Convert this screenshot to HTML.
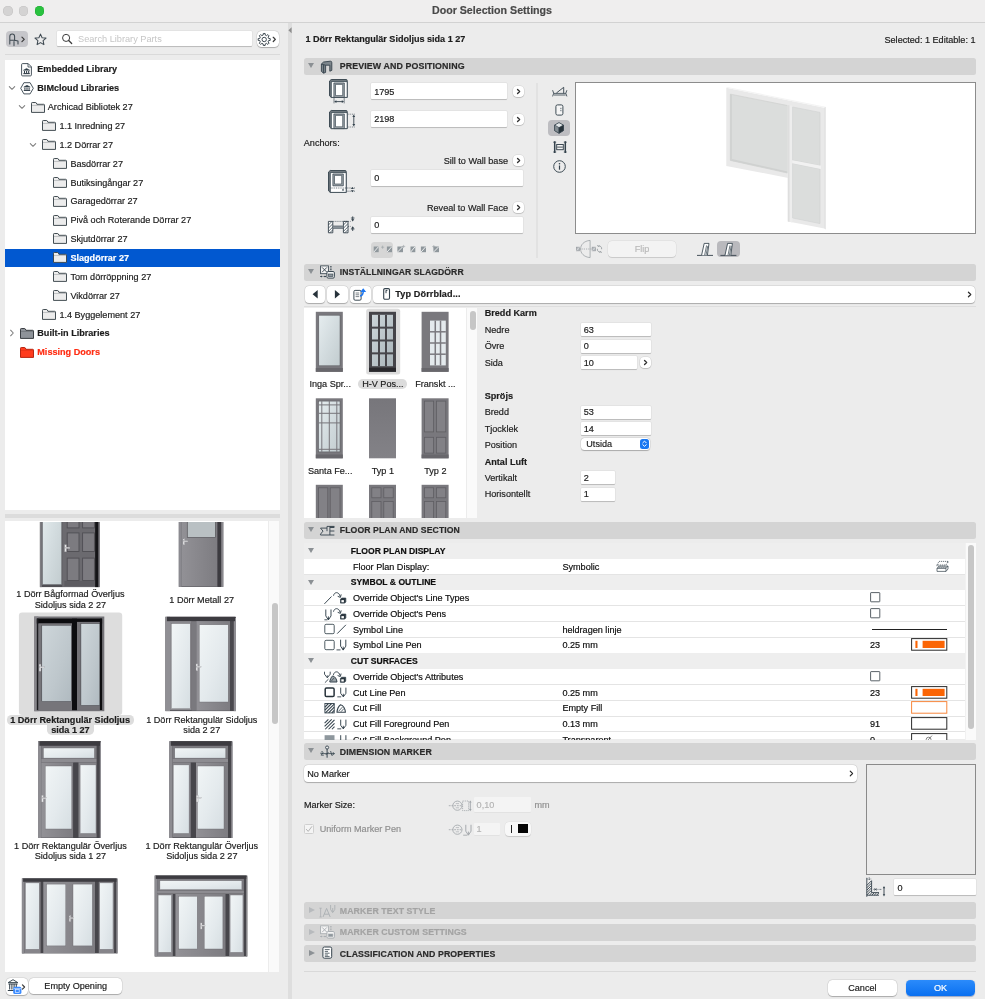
<!DOCTYPE html>
<html lang="sv"><head><meta charset="utf-8"><title>Door Selection Settings</title>
<style>
*{box-sizing:border-box;margin:0;padding:0}
html,body{width:985px;height:999px;overflow:hidden;background:#ececec}
body{font-family:"Liberation Sans",sans-serif;font-size:9.1px;color:#262626;position:relative;-webkit-font-smoothing:antialiased}
#w{position:absolute;left:0;top:0;width:985px;height:999px;will-change:transform;opacity:.999}
.a{position:absolute}
.t{position:absolute;white-space:nowrap;line-height:12px;height:12px;-webkit-text-stroke:.18px currentColor}
.b{font-weight:bold}
.fld{position:absolute;background:#fff;border-radius:.8px;box-shadow:0 0 0 .5px rgba(0,0,0,.06),0 .8px .9px rgba(0,0,0,.2);}
.btn{position:absolute;background:#fff;border-radius:4px;box-shadow:0 0 0 .5px rgba(0,0,0,.10),0 .7px 1px rgba(0,0,0,.25);}
.sec{position:absolute;left:303.8px;width:672.4px;height:17px;background:#d4d4d4;border-radius:2.5px}
.sec .t{font-weight:bold;left:36px;top:2.7px;font-size:8.75px;letter-spacing:.1px;color:#2a2a2a}
.tri{position:absolute;width:0;height:0;border-left:3.6px solid transparent;border-right:3.6px solid transparent;border-top:5.8px solid #8b9094}
.trir{position:absolute;width:0;height:0;border-top:3.5px solid transparent;border-bottom:3.5px solid transparent;border-left:6.2px solid #808080}
.rb{position:absolute;width:11px;height:11px;border-radius:3.8px;background:#fff;box-shadow:0 0 0 .5px rgba(0,0,0,.10),0 .6px 1px rgba(0,0,0,.28)}
svg{position:absolute;overflow:visible}
</style></head>
<body><div id="w">
<div class="a" style="left:0.0px;top:0.0px;width:985.0px;height:22.5px;background:#efeeee;border-bottom:1px solid #d2d2d2"></div>
<div class="a" style="left:3.2px;top:6.2px;width:9.6px;height:9.6px;border-radius:50%;background:#d4d3d3;box-shadow:inset 0 0 0 .5px #c3c2c2"></div>
<div class="a" style="left:18.8px;top:6.2px;width:9.6px;height:9.6px;border-radius:50%;background:#d4d3d3;box-shadow:inset 0 0 0 .5px #c3c2c2"></div>
<div class="a" style="left:34.6px;top:6.2px;width:9.6px;height:9.6px;border-radius:50%;background:#29c23f;box-shadow:inset 0 0 0 .5px #1fa833"></div>
<div class="t b" style="left:342.0px;width:300px;text-align:center;top:4.2px;font-size:10.65px;color:#484848;line-height:14px;height:14px;margin-top:-1px">Door Selection Settings</div>
<div class="a" style="left:5.6px;top:30.5px;width:22.2px;height:16.6px;background:#c6c6ca;border-radius:4px"></div>
<svg style="left:5.5px;top:30.6px;" width="22" height="16" viewBox="0 0 22 16"><g fill="none" stroke="#3f4a52" stroke-width="1.05" stroke-linecap="round" stroke-linejoin="round">
<path d="M3.8 13V5.6a2.4 2.6 0 0 1 4.8 0v3.6H3.8"/><path d="M8.6 9.2l3.4 .8v3M8 10.6v4"/></g><path d="M15.95 6.10 L18.25 8.40 L15.95 10.70" fill="none" stroke="#3a3a3a" stroke-width="1.2" stroke-linecap="round" stroke-linejoin="round"/></svg>
<svg style="left:33.5px;top:32.5px;" width="13" height="13" viewBox="0 0 13 13"><path d="M6.5 1.1 L8.1 4.7 L12 5.1 L9.1 7.7 L9.9 11.6 L6.5 9.6 L3.1 11.6 L3.9 7.7 L1 5.1 L4.9 4.7 Z" fill="none" stroke="#3f4a52" stroke-width="1.05" stroke-linejoin="round"/></svg>
<div class="fld" style="left:56.6px;top:31.0px;width:195.4px;height:15.0px;border-radius:.8px"></div>
<svg style="left:61.0px;top:33.0px;" width="12" height="12" viewBox="0 0 12 12"><circle cx="5.1" cy="4.9" r="3.55" fill="none" stroke="#3a3a3a" stroke-width="1"/><path d="M7.7 7.5 L10.7 10.5" stroke="#3a3a3a" stroke-width="1.2" stroke-linecap="round"/></svg>
<div class="t " style="left:78.0px;top:32.8px;color:#c6c6c6;font-size:9.2px;-webkit-text-stroke:0">Search Library Parts</div>
<div class="btn" style="left:257.3px;top:30.8px;width:21.7px;height:15.8px;border-radius:4.5px"></div>
<svg style="left:257.3px;top:30.8px;" width="22" height="16" viewBox="0 0 22 16"><g transform="translate(7.2,8.5)"><path d="M-1.06 -4.42 L-0.90 -6.03 L0.90 -6.03 L1.06 -4.42 L2.38 -3.88 L3.63 -4.90 L4.90 -3.63 L3.88 -2.38 L4.42 -1.06 L6.03 -0.90 L6.03 0.90 L4.42 1.06 L3.88 2.38 L4.90 3.63 L3.63 4.90 L2.38 3.88 L1.06 4.42 L0.90 6.03 L-0.90 6.03 L-1.06 4.42 L-2.38 3.88 L-3.63 4.90 L-4.90 3.63 L-3.88 2.38 L-4.42 1.06 L-6.03 0.90 L-6.03 -0.90 L-4.42 -1.06 L-3.88 -2.38 L-4.90 -3.63 L-3.63 -4.90 L-2.38 -3.88 Z" fill="none" stroke="#3f4a52" stroke-width="1" stroke-linejoin="round"/><circle r="2.2" fill="none" stroke="#3f4a52" stroke-width="1"/></g><path d="M16.27 6.33 L18.34 8.40 L16.27 10.47" fill="none" stroke="#3a3a3a" stroke-width="1.3" stroke-linecap="round" stroke-linejoin="round"/></svg>
<div class="a" style="left:5.0px;top:54.0px;width:275.0px;height:1.0px;background:#dadada"></div>
<div class="a" style="left:288.0px;top:22.5px;width:4.0px;height:976.5px;background:#dedede"></div>
<svg style="left:288.0px;top:27.0px;" width="4" height="7" viewBox="0 0 4 7"><path d="M3.6 0.3 L0.4 3.3 L3.6 6.3 Z" fill="#8d8d8d"/></svg>
<div class="a" style="left:5.0px;top:59.8px;width:275.0px;height:450.0px;background:#fff"></div>
<svg style="left:21.0px;top:62.5px;" width="11" height="13.5" viewBox="0 0 11 13.5"><path d="M.6 1.6 a1 1 0 0 1 1 -1 H7.2 L10.4 3.8 V11.9 a1 1 0 0 1 -1 1 H1.6 a1 1 0 0 1 -1 -1 Z" fill="#fff" stroke="#34424c" stroke-width=".9" stroke-linejoin="round"/><path d="M7 .8 V4 H10.2" fill="none" stroke="#34424c" stroke-width=".8"/><g transform="translate(5.6,8.3)"><path d="M-3.2 -1 L0 -2.9 L3.2 -1 Z" fill="#2f3c46" stroke="#2f3c46" stroke-width=".5" stroke-linejoin="round"/><path d="M-2.1 -.4 V1.6 M0 -.4 V1.6 M2.1 -.4 V1.6" stroke="#2f3c46" stroke-width="1.05"/><path d="M-3.2 2.3 H3.2" stroke="#2f3c46" stroke-width="1.1"/></g></svg>
<div class="t b" style="left:37.3px;top:63.4px;color:#1c1c1c">Embedded Library</div>
<svg style="left:7.7px;top:85.2px;" width="8" height="6" viewBox="0 0 8 6"><path d="M1.3 1.6 L4 4.3 L6.7 1.6" fill="none" stroke="#7d7d7d" stroke-width="1.05" stroke-linecap="round" stroke-linejoin="round"/></svg>
<svg style="left:19.6px;top:81.9px;" width="14" height="12.6" viewBox="0 0 14 12.6"><path d="M.7 6.3 L3.9 .7 H10.1 L13.3 6.3 L10.1 11.9 H3.9 Z" fill="#fff" stroke="#34424c" stroke-width=".9" stroke-linejoin="round"/><g transform="translate(7,6.1)"><path d="M-3.2 -1 L0 -2.9 L3.2 -1 Z" fill="#2f3c46" stroke="#2f3c46" stroke-width=".5" stroke-linejoin="round"/><path d="M-2.1 -.4 V1.6 M0 -.4 V1.6 M2.1 -.4 V1.6" stroke="#2f3c46" stroke-width="1.05"/><path d="M-3.2 2.3 H3.2" stroke="#2f3c46" stroke-width="1.1"/></g></svg>
<div class="t b" style="left:37.3px;top:82.3px;color:#1c1c1c">BIMcloud Libraries</div>
<svg style="left:18.4px;top:104.0px;" width="8" height="6" viewBox="0 0 8 6"><path d="M1.3 1.6 L4 4.3 L6.7 1.6" fill="none" stroke="#7d7d7d" stroke-width="1.05" stroke-linecap="round" stroke-linejoin="round"/></svg>
<svg style="left:30.5px;top:101.5px;" width="14" height="11" viewBox="0 0 14 11"><path d="M.5 10.4 V1.3 a.8 .8 0 0 1 .8 -.8 H4.6 a.8 .8 0 0 1 .7 .45 L5.9 2.3 H12.7 a.8 .8 0 0 1 .8 .8 V10.4 Z" fill="#ececec" stroke="#3a444b" stroke-width=".95" stroke-linejoin="round"/><path d="M.9 3.6 H13.1" stroke="#3a444b" stroke-width=".5" opacity=".55"/></svg>
<div class="t " style="left:47.8px;top:101.2px;color:#1c1c1c">Archicad Bibliotek 27</div>
<svg style="left:41.7px;top:120.3px;" width="14" height="11" viewBox="0 0 14 11"><path d="M.5 10.4 V1.3 a.8 .8 0 0 1 .8 -.8 H4.6 a.8 .8 0 0 1 .7 .45 L5.9 2.3 H12.7 a.8 .8 0 0 1 .8 .8 V10.4 Z" fill="#ececec" stroke="#3a444b" stroke-width=".95" stroke-linejoin="round"/><path d="M.9 3.6 H13.1" stroke="#3a444b" stroke-width=".5" opacity=".55"/></svg>
<div class="t " style="left:59.4px;top:120.0px;color:#1c1c1c">1.1 Inredning 27</div>
<svg style="left:29.4px;top:141.7px;" width="8" height="6" viewBox="0 0 8 6"><path d="M1.3 1.6 L4 4.3 L6.7 1.6" fill="none" stroke="#7d7d7d" stroke-width="1.05" stroke-linecap="round" stroke-linejoin="round"/></svg>
<svg style="left:41.7px;top:139.2px;" width="14" height="11" viewBox="0 0 14 11"><path d="M.5 10.4 V1.3 a.8 .8 0 0 1 .8 -.8 H4.6 a.8 .8 0 0 1 .7 .45 L5.9 2.3 H12.7 a.8 .8 0 0 1 .8 .8 V10.4 Z" fill="#ececec" stroke="#3a444b" stroke-width=".95" stroke-linejoin="round"/><path d="M.9 3.6 H13.1" stroke="#3a444b" stroke-width=".5" opacity=".55"/></svg>
<div class="t " style="left:59.4px;top:138.8px;color:#1c1c1c">1.2 Dörrar 27</div>
<svg style="left:52.5px;top:158.1px;" width="14" height="11" viewBox="0 0 14 11"><path d="M.5 10.4 V1.3 a.8 .8 0 0 1 .8 -.8 H4.6 a.8 .8 0 0 1 .7 .45 L5.9 2.3 H12.7 a.8 .8 0 0 1 .8 .8 V10.4 Z" fill="#ececec" stroke="#3a444b" stroke-width=".95" stroke-linejoin="round"/><path d="M.9 3.6 H13.1" stroke="#3a444b" stroke-width=".5" opacity=".55"/></svg>
<div class="t " style="left:70.4px;top:157.7px;color:#1c1c1c">Basdörrar 27</div>
<svg style="left:52.5px;top:176.9px;" width="14" height="11" viewBox="0 0 14 11"><path d="M.5 10.4 V1.3 a.8 .8 0 0 1 .8 -.8 H4.6 a.8 .8 0 0 1 .7 .45 L5.9 2.3 H12.7 a.8 .8 0 0 1 .8 .8 V10.4 Z" fill="#ececec" stroke="#3a444b" stroke-width=".95" stroke-linejoin="round"/><path d="M.9 3.6 H13.1" stroke="#3a444b" stroke-width=".5" opacity=".55"/></svg>
<div class="t " style="left:70.4px;top:176.6px;color:#1c1c1c">Butiksingångar 27</div>
<svg style="left:52.5px;top:195.8px;" width="14" height="11" viewBox="0 0 14 11"><path d="M.5 10.4 V1.3 a.8 .8 0 0 1 .8 -.8 H4.6 a.8 .8 0 0 1 .7 .45 L5.9 2.3 H12.7 a.8 .8 0 0 1 .8 .8 V10.4 Z" fill="#ececec" stroke="#3a444b" stroke-width=".95" stroke-linejoin="round"/><path d="M.9 3.6 H13.1" stroke="#3a444b" stroke-width=".5" opacity=".55"/></svg>
<div class="t " style="left:70.4px;top:195.4px;color:#1c1c1c">Garagedörrar 27</div>
<svg style="left:52.5px;top:214.6px;" width="14" height="11" viewBox="0 0 14 11"><path d="M.5 10.4 V1.3 a.8 .8 0 0 1 .8 -.8 H4.6 a.8 .8 0 0 1 .7 .45 L5.9 2.3 H12.7 a.8 .8 0 0 1 .8 .8 V10.4 Z" fill="#ececec" stroke="#3a444b" stroke-width=".95" stroke-linejoin="round"/><path d="M.9 3.6 H13.1" stroke="#3a444b" stroke-width=".5" opacity=".55"/></svg>
<div class="t " style="left:70.4px;top:214.3px;color:#1c1c1c">Pivå och Roterande Dörrar 27</div>
<svg style="left:52.5px;top:233.4px;" width="14" height="11" viewBox="0 0 14 11"><path d="M.5 10.4 V1.3 a.8 .8 0 0 1 .8 -.8 H4.6 a.8 .8 0 0 1 .7 .45 L5.9 2.3 H12.7 a.8 .8 0 0 1 .8 .8 V10.4 Z" fill="#ececec" stroke="#3a444b" stroke-width=".95" stroke-linejoin="round"/><path d="M.9 3.6 H13.1" stroke="#3a444b" stroke-width=".5" opacity=".55"/></svg>
<div class="t " style="left:70.4px;top:233.1px;color:#1c1c1c">Skjutdörrar 27</div>
<div class="a" style="left:5.0px;top:248.7px;width:275.0px;height:18.3px;background:#0058d0"></div>
<svg style="left:52.5px;top:252.3px;" width="14" height="11" viewBox="0 0 14 11"><path d="M.5 10.4 V1.3 a.8 .8 0 0 1 .8 -.8 H4.6 a.8 .8 0 0 1 .7 .45 L5.9 2.3 H12.7 a.8 .8 0 0 1 .8 .8 V10.4 Z" fill="#ececec" stroke="#3a444b" stroke-width=".95" stroke-linejoin="round"/><path d="M.9 3.6 H13.1" stroke="#3a444b" stroke-width=".5" opacity=".55"/></svg>
<div class="t b" style="left:70.4px;top:252.0px;color:#fff">Slagdörrar 27</div>
<svg style="left:52.5px;top:271.2px;" width="14" height="11" viewBox="0 0 14 11"><path d="M.5 10.4 V1.3 a.8 .8 0 0 1 .8 -.8 H4.6 a.8 .8 0 0 1 .7 .45 L5.9 2.3 H12.7 a.8 .8 0 0 1 .8 .8 V10.4 Z" fill="#ececec" stroke="#3a444b" stroke-width=".95" stroke-linejoin="round"/><path d="M.9 3.6 H13.1" stroke="#3a444b" stroke-width=".5" opacity=".55"/></svg>
<div class="t " style="left:70.4px;top:270.8px;color:#1c1c1c">Tom dörröppning 27</div>
<svg style="left:52.5px;top:290.0px;" width="14" height="11" viewBox="0 0 14 11"><path d="M.5 10.4 V1.3 a.8 .8 0 0 1 .8 -.8 H4.6 a.8 .8 0 0 1 .7 .45 L5.9 2.3 H12.7 a.8 .8 0 0 1 .8 .8 V10.4 Z" fill="#ececec" stroke="#3a444b" stroke-width=".95" stroke-linejoin="round"/><path d="M.9 3.6 H13.1" stroke="#3a444b" stroke-width=".5" opacity=".55"/></svg>
<div class="t " style="left:70.4px;top:289.6px;color:#1c1c1c">Vikdörrar 27</div>
<svg style="left:41.7px;top:308.9px;" width="14" height="11" viewBox="0 0 14 11"><path d="M.5 10.4 V1.3 a.8 .8 0 0 1 .8 -.8 H4.6 a.8 .8 0 0 1 .7 .45 L5.9 2.3 H12.7 a.8 .8 0 0 1 .8 .8 V10.4 Z" fill="#ececec" stroke="#3a444b" stroke-width=".95" stroke-linejoin="round"/><path d="M.9 3.6 H13.1" stroke="#3a444b" stroke-width=".5" opacity=".55"/></svg>
<div class="t " style="left:59.4px;top:308.5px;color:#1c1c1c">1.4 Byggelement 27</div>
<svg style="left:9.0px;top:328.7px;" width="6" height="8" viewBox="0 0 6 8"><path d="M1.6 1.2 L4.3 4 L1.6 6.8" fill="none" stroke="#7d7d7d" stroke-width="1.05" stroke-linecap="round" stroke-linejoin="round"/></svg>
<svg style="left:20.0px;top:327.7px;" width="14" height="11" viewBox="0 0 14 11"><path d="M.5 10.4 V1.3 a.8 .8 0 0 1 .8 -.8 H4.6 a.8 .8 0 0 1 .7 .45 L5.9 2.3 H12.7 a.8 .8 0 0 1 .8 .8 V10.4 Z" fill="#8e9399" stroke="#33373b" stroke-width=".95" stroke-linejoin="round"/><path d="M.9 3.6 H13.1" stroke="#33373b" stroke-width=".5" opacity=".55"/></svg>
<div class="t b" style="left:37.3px;top:327.4px;color:#1c1c1c">Built-in Libraries</div>
<svg style="left:20.0px;top:346.6px;" width="14" height="11" viewBox="0 0 14 11"><path d="M.5 10.4 V1.3 a.8 .8 0 0 1 .8 -.8 H4.6 a.8 .8 0 0 1 .7 .45 L5.9 2.3 H12.7 a.8 .8 0 0 1 .8 .8 V10.4 Z" fill="#ff3b1d" stroke="#b3200c" stroke-width=".95" stroke-linejoin="round"/><path d="M.9 3.6 H13.1" stroke="#b3200c" stroke-width=".5" opacity=".55"/></svg>
<div class="t b" style="left:37.3px;top:346.2px;color:#ff2c12">Missing Doors</div>
<div class="a" style="left:5.0px;top:513.8px;width:275.0px;height:4.0px;background:#dcdcdc"></div>
<svg width="0" height="0" style="left:0;top:0"><defs><linearGradient id="gl" x1="0" y1="0" x2="1" y2="1"><stop offset="0" stop-color="#e6edef"/><stop offset=".5" stop-color="#d3dcdf"/><stop offset="1" stop-color="#c2cccf"/></linearGradient><linearGradient id="gl2" x1="0" y1="0" x2="1" y2="0"><stop offset="0" stop-color="#cfd8db"/><stop offset=".5" stop-color="#e4ebed"/><stop offset="1" stop-color="#ccd5d8"/></linearGradient><linearGradient id="gl3" x1="0" y1="0" x2="1" y2="1"><stop offset="0" stop-color="#cdd6da"/><stop offset="1" stop-color="#a9b4b9"/></linearGradient><linearGradient id="glw" x1="0" y1="0" x2="1" y2="1"><stop offset="0" stop-color="#f1f5f6"/><stop offset=".55" stop-color="#e4eaed"/><stop offset="1" stop-color="#d6dee2"/></linearGradient><linearGradient id="frl" x1="0" y1="0" x2="1" y2="0"><stop offset="0" stop-color="#929196"/><stop offset="1" stop-color="#7d7c81"/></linearGradient><linearGradient id="gls" x1="0" y1="0" x2="1" y2="1"><stop offset="0" stop-color="#ced6da"/><stop offset=".6" stop-color="#bec7cc"/><stop offset="1" stop-color="#b0bac0"/></linearGradient><linearGradient id="fr" x1="0" y1="0" x2="1" y2="0"><stop offset="0" stop-color="#77767c"/><stop offset="1" stop-color="#5d5c62"/></linearGradient><linearGradient id="pn" x1="0" y1="0" x2="0" y2="1"><stop offset="0" stop-color="#77767b"/><stop offset="1" stop-color="#838287"/></linearGradient></defs></svg>
<div class="a" style="left:5.0px;top:521.4px;width:274.4px;height:450.8px;background:#fff"></div>
<div class="a" style="left:5px;top:521.5px;width:263px;height:450px;overflow:hidden">
<svg style="left:0;top:0" width="263" height="450"><rect x="34.90" y="-21.50" width="59.60" height="86.60" fill="#504f54" /><rect x="34.90" y="-21.50" width="1.90" height="86.60" fill="#7e7d82" /><rect x="37.30" y="-21.50" width="19.50" height="84.20" fill="url(#gl)" stroke="#55545a" stroke-width=".5"/><rect x="57.20" y="-21.50" width="33.00" height="86.40" fill="#6b6a6f" /><rect x="59.40" y="58.90" width="30.80" height="5.20" fill="#5d5c61" /><rect x="90.20" y="-21.50" width="3.00" height="86.60" fill="#141417" /><rect x="93.20" y="-21.50" width="1.30" height="86.60" fill="#5a595e" /><rect x="62.20" y="-21.50" width="11.80" height="27.40" fill="#7c7b80" stroke="#4f4e53" stroke-width=".9"/><rect x="62.20" y="10.90" width="11.80" height="18.60" fill="#7c7b80" stroke="#4f4e53" stroke-width=".9"/><rect x="62.20" y="36.10" width="11.80" height="22.40" fill="#7c7b80" stroke="#4f4e53" stroke-width=".9"/><rect x="77.60" y="-21.50" width="11.80" height="27.40" fill="#7c7b80" stroke="#4f4e53" stroke-width=".9"/><rect x="77.60" y="10.90" width="11.80" height="18.60" fill="#7c7b80" stroke="#4f4e53" stroke-width=".9"/><rect x="77.60" y="36.10" width="11.80" height="22.40" fill="#7c7b80" stroke="#4f4e53" stroke-width=".9"/><rect x="59.60" y="22.70" width="1.84" height="7.13" fill="#e8e8ea" stroke="#8c8c90" stroke-width=".3"/><rect x="60.29" y="25.23" width="4.60" height="1.26" fill="#f2f2f4" stroke="#8c8c90" stroke-width=".3"/><rect x="173.80" y="-21.50" width="44.50" height="86.40" fill="#5b5a60" /><rect x="173.80" y="-21.50" width="2.60" height="86.40" fill="#8b8a90" /><rect x="176.40" y="-21.50" width="36.10" height="85.60" fill="url(#frl)" /><rect x="212.50" y="-21.50" width="3.80" height="86.40" fill="#3c3b40" /><rect x="216.30" y="-21.50" width="2.00" height="86.40" fill="#8a898e" /><rect x="182.30" y="-21.50" width="28.10" height="37.00" fill="#b9c0c3" stroke="#56555a" stroke-width=".7"/><rect x="178.00" y="16.50" width="1.60" height="6.20" fill="#e8e8ea" stroke="#8c8c90" stroke-width=".3"/><rect x="178.60" y="18.70" width="4.00" height="1.10" fill="#f2f2f4" stroke="#8c8c90" stroke-width=".3"/><rect x="13.899999999999999" y="90.39999999999998" width="103.3" height="102.6" rx="3.2" fill="#dddddd"/><rect x="29.20" y="94.50" width="70.10" height="94.70" fill="#737277" /><rect x="29.20" y="94.50" width="4.20" height="94.70" fill="#87868b" /><rect x="31.80" y="96.50" width="65.30" height="5.00" fill="#0c0c0f" /><rect x="31.80" y="96.50" width="1.80" height="91.70" fill="#1c1c20" /><rect x="33.40" y="101.50" width="33.80" height="86.70" fill="#76757a" /><rect x="36.80" y="103.20" width="29.60" height="76.50" fill="url(#gls)" stroke="#3a393e" stroke-width=".5"/><rect x="67.00" y="96.70" width="5.00" height="91.50" fill="#0c0c0f" /><rect x="72.00" y="99.90" width="22.90" height="87.90" fill="#727176" /><rect x="75.90" y="101.50" width="19.00" height="82.10" fill="url(#gls)" stroke="#3a393e" stroke-width=".5"/><rect x="94.90" y="96.70" width="2.20" height="91.30" fill="#0c0c0f" /><rect x="34.10" y="142.10" width="1.84" height="7.13" fill="#e8e8ea" stroke="#8c8c90" stroke-width=".3"/><rect x="34.79" y="144.63" width="4.60" height="1.26" fill="#f2f2f4" stroke="#8c8c90" stroke-width=".3"/><rect x="160.40" y="94.80" width="70.60" height="94.30" fill="#4a494e" /><rect x="160.40" y="94.80" width="4.60" height="94.30" fill="#908f94" /><rect x="228.80" y="95.80" width="2.20" height="93.30" fill="#8f8e93" /><rect x="161.90" y="94.80" width="68.10" height="4.40" fill="#3c3b40" /><rect x="191.20" y="99.10" width="33.80" height="89.60" fill="url(#frl)" /><rect x="194.20" y="102.80" width="29.00" height="77.20" fill="url(#glw)" stroke="#6b6a6f" stroke-width=".4"/><rect x="186.60" y="99.20" width="4.60" height="89.50" fill="#7a797e" /><rect x="165.00" y="99.10" width="21.60" height="89.20" fill="#8a898e" /><rect x="166.20" y="101.60" width="19.00" height="85.20" fill="url(#glw)" stroke="#6b6a6f" stroke-width=".4"/><rect x="191.00" y="141.80" width="1.76" height="6.82" fill="#e8e8ea" stroke="#8c8c90" stroke-width=".3"/><rect x="191.66" y="144.22" width="4.40" height="1.21" fill="#f2f2f4" stroke="#8c8c90" stroke-width=".3"/><rect x="33.00" y="219.20" width="63.00" height="96.80" fill="#47464b" /><rect x="33.00" y="219.20" width="3.20" height="96.80" fill="#8d8c91" /><rect x="94.80" y="220.20" width="1.20" height="95.80" fill="#8f8e93" /><rect x="34.40" y="219.20" width="60.60" height="4.60" fill="#3d3c41" /><rect x="36.20" y="223.80" width="55.40" height="13.00" fill="#7c7b80" /><rect x="38.40" y="226.00" width="51.00" height="10.10" fill="url(#glw)" stroke="#6b6a6f" stroke-width=".4"/><rect x="36.20" y="236.80" width="55.40" height="3.80" fill="#8d8c91" /><rect x="36.20" y="240.60" width="32.10" height="75.10" fill="url(#frl)" /><rect x="40.20" y="244.00" width="26.60" height="63.00" fill="url(#glw)" stroke="#6b6a6f" stroke-width=".4"/><rect x="68.30" y="240.60" width="5.20" height="75.10" fill="#47464b" /><rect x="73.50" y="240.60" width="18.10" height="74.80" fill="#86858a" /><rect x="75.10" y="242.90" width="15.90" height="68.60" fill="url(#glw)" stroke="#6b6a6f" stroke-width=".4"/><rect x="36.60" y="273.20" width="1.76" height="6.82" fill="#e8e8ea" stroke="#8c8c90" stroke-width=".3"/><rect x="37.26" y="275.62" width="4.40" height="1.21" fill="#f2f2f4" stroke="#8c8c90" stroke-width=".3"/><rect x="164.40" y="219.20" width="63.00" height="96.80" fill="#47464b" /><rect x="164.40" y="219.20" width="3.20" height="96.80" fill="#8d8c91" /><rect x="226.20" y="220.20" width="1.20" height="95.80" fill="#8f8e93" /><rect x="165.80" y="219.20" width="60.60" height="4.60" fill="#3d3c41" /><rect x="167.60" y="223.80" width="55.40" height="13.00" fill="#7c7b80" /><rect x="169.80" y="226.00" width="51.00" height="10.10" fill="url(#glw)" stroke="#6b6a6f" stroke-width=".4"/><rect x="167.60" y="236.80" width="55.40" height="3.80" fill="#8d8c91" /><rect x="190.90" y="240.60" width="32.10" height="75.10" fill="url(#frl)" /><rect x="192.40" y="244.00" width="26.60" height="63.00" fill="url(#glw)" stroke="#6b6a6f" stroke-width=".4"/><rect x="185.70" y="240.60" width="5.20" height="75.10" fill="#47464b" /><rect x="167.60" y="240.60" width="18.10" height="74.80" fill="#86858a" /><rect x="168.20" y="242.90" width="15.90" height="68.60" fill="url(#glw)" stroke="#6b6a6f" stroke-width=".4"/><rect x="191.30" y="273.20" width="1.76" height="6.82" fill="#e8e8ea" stroke="#8c8c90" stroke-width=".3"/><rect x="191.96" y="275.62" width="4.40" height="1.21" fill="#f2f2f4" stroke="#8c8c90" stroke-width=".3"/><rect x="16.90" y="356.40" width="95.60" height="75.00" fill="#47464b" /><rect x="16.90" y="356.40" width="2.40" height="75.00" fill="#8d8c91" /><rect x="111.30" y="357.40" width="1.20" height="74.00" fill="#8f8e93" /><rect x="18.10" y="356.40" width="93.40" height="3.40" fill="#3d3c41" /><rect x="19.30" y="359.80" width="16.30" height="71.20" fill="#86858a" /><rect x="20.40" y="360.90" width="13.80" height="66.40" fill="url(#glw)" stroke="#6b6a6f" stroke-width=".4"/><rect x="93.80" y="359.80" width="15.30" height="71.20" fill="#86858a" /><rect x="94.70" y="360.90" width="13.30" height="66.40" fill="url(#glw)" stroke="#6b6a6f" stroke-width=".4"/><rect x="38.30" y="359.80" width="51.70" height="71.30" fill="url(#frl)" /><rect x="41.60" y="362.10" width="19.20" height="61.80" fill="url(#glw)" stroke="#6b6a6f" stroke-width=".4"/><rect x="68.00" y="362.10" width="19.30" height="61.80" fill="url(#glw)" stroke="#6b6a6f" stroke-width=".4"/><rect x="64.10" y="393.30" width="1.60" height="6.20" fill="#e8e8ea" stroke="#8c8c90" stroke-width=".3"/><rect x="64.70" y="395.50" width="4.00" height="1.10" fill="#f2f2f4" stroke="#8c8c90" stroke-width=".3"/><rect x="149.70" y="353.50" width="92.60" height="81.00" fill="#47464b" /><rect x="149.70" y="353.50" width="2.40" height="81.00" fill="#8d8c91" /><rect x="241.10" y="354.50" width="1.20" height="80.00" fill="#8f8e93" /><rect x="150.90" y="353.50" width="90.40" height="3.40" fill="#3d3c41" /><rect x="152.10" y="356.90" width="86.80" height="11.60" fill="#7c7b80" /><rect x="154.90" y="358.70" width="82.00" height="9.00" fill="url(#glw)" stroke="#6b6a6f" stroke-width=".4"/><rect x="152.10" y="368.50" width="86.80" height="3.20" fill="#8d8c91" /><rect x="152.10" y="371.90" width="15.71" height="62.20" fill="#86858a" /><rect x="153.11" y="373.00" width="13.35" height="57.40" fill="url(#glw)" stroke="#6b6a6f" stroke-width=".4"/><rect x="224.19" y="371.90" width="14.71" height="62.20" fill="#86858a" /><rect x="225.08" y="373.00" width="12.86" height="57.40" fill="url(#glw)" stroke="#6b6a6f" stroke-width=".4"/><rect x="170.43" y="371.90" width="50.08" height="62.30" fill="url(#frl)" /><rect x="173.62" y="374.20" width="18.60" height="52.80" fill="url(#glw)" stroke="#6b6a6f" stroke-width=".4"/><rect x="199.20" y="374.20" width="18.69" height="52.80" fill="url(#glw)" stroke="#6b6a6f" stroke-width=".4"/><rect x="195.42" y="400.90" width="1.60" height="6.20" fill="#e8e8ea" stroke="#8c8c90" stroke-width=".3"/><rect x="196.02" y="403.10" width="4.00" height="1.10" fill="#f2f2f4" stroke="#8c8c90" stroke-width=".3"/></svg>
</div>
<div class="t " style="left:-79.6px;width:300px;text-align:center;top:588.4px;color:#1c1c1c">1 Dörr Bågformad Överljus</div>
<div class="t " style="left:-79.6px;width:300px;text-align:center;top:598.5px;color:#1c1c1c">Sidoljus sida 2 27</div>
<div class="t " style="left:51.7px;width:300px;text-align:center;top:593.8px;color:#1c1c1c">1 Dörr Metall 27</div>
<div class="a" style="left:6.8px;top:715.3px;width:126.8px;height:9.5px;background:#dddddd;border-radius:4.6px"></div>
<div class="a" style="left:46.9px;top:724.4px;width:47.6px;height:10.4px;background:#dddddd;border-radius:0 0 4.8px 4.8px"></div>
<div class="t b" style="left:-79.9px;width:300px;text-align:center;top:714.1px;color:#1c1c1c">1 Dörr Rektangulär Sidoljus</div>
<div class="t b" style="left:-79.6px;width:300px;text-align:center;top:724.4px;color:#1c1c1c">sida 1 27</div>
<div class="t " style="left:51.8px;width:300px;text-align:center;top:714.1px;color:#1c1c1c">1 Dörr Rektangulär Sidoljus</div>
<div class="t " style="left:51.8px;width:300px;text-align:center;top:724.4px;color:#1c1c1c">sida 2 27</div>
<div class="t " style="left:-79.6px;width:300px;text-align:center;top:839.9px;color:#1c1c1c">1 Dörr Rektangulär Överljus</div>
<div class="t " style="left:-79.6px;width:300px;text-align:center;top:849.8px;color:#1c1c1c">Sidoljus sida 1 27</div>
<div class="t " style="left:51.8px;width:300px;text-align:center;top:839.9px;color:#1c1c1c">1 Dörr Rektangulär Överljus</div>
<div class="t " style="left:51.8px;width:300px;text-align:center;top:849.8px;color:#1c1c1c">Sidoljus sida 2 27</div>
<div class="a" style="left:268.0px;top:521.4px;width:11.4px;height:450.8px;background:#fafafa;border-left:1px solid #ececec"></div>
<div class="a" style="left:271.6px;top:602.6px;width:6.0px;height:121.4px;background:#c6c6c6;border-radius:3px"></div>
<div class="btn" style="left:5.5px;top:977.6px;width:22.2px;height:17.2px;border-radius:4.5px"></div>
<svg style="left:5.5px;top:977.6px;" width="23" height="17" viewBox="0 0 23 17"><g fill="none" stroke="#34424c" stroke-width=".95" stroke-linejoin="round"><path d="M2.2 4.6 L7 1.7 L11.8 4.6 Z" fill="#fff"/><path d="M2.4 5.9 H11.6 M3.7 6.4 V11.6 M5.9 6.4 V11.6 M8.1 6.4 V11.6 M10.3 6.4 V11.6 M1.8 12.4 H8" stroke-width="1.05"/></g>
<rect x="7.2" y="8.8" width="8.2" height="7.2" rx="1.6" fill="#3a8bff"/><path d="M7.6 10.6 H15" stroke="#cfe2ff" stroke-width=".7"/><rect x="9.6" y="11.6" width="3.6" height="2.8" fill="none" stroke="#dbe9ff" stroke-width=".7"/><path d="M16.46 6.93 L18.54 9.00 L16.46 11.07" fill="none" stroke="#3a3a3a" stroke-width="1.25" stroke-linecap="round" stroke-linejoin="round"/></svg>
<div class="btn" style="left:29.3px;top:978.0px;width:92.5px;height:15.8px;border-radius:4.5px"></div>
<div class="t " style="left:-74.3px;width:300px;text-align:center;top:979.9px;color:#1c1c1c">Empty Opening</div>
<div class="t b" style="left:305.4px;top:33.1px;color:#1c1c1c;font-size:9.05px">1 Dörr Rektangulär Sidoljus sida 1 27</div>
<div class="t " style="right:9.5px;top:33.5px;color:#1c1c1c">Selected: 1 Editable: 1</div>
<div class="sec" style="top:58.0px"><div class="tri" style="left:4.6px;top:5.1px"></div><svg style="left:15px;top:1.5px" width="20" height="14"><g fill="none" stroke="#34424c" stroke-width=".9" stroke-linejoin="round"><path d="M2.4 11.4 V4 L4.6 2 L11.4 1.2 a1.4 1.4 0 0 1 1.4 1.4 V10.4 L10.8 11.2 V5.2 H6.6 V12.4 L4.6 13.2 Z" fill="#7d868c"/><path d="M2.4 4 L6.6 5.2 M4.6 13 V5"/></g></svg><div class="t" style="font-size:8.85px;top:1.7px">PREVIEW AND POSITIONING</div></div>
<div class="fld" style="left:370.8px;top:82.8px;width:136.4px;height:16.0px;"></div>
<div class="t " style="left:374.2px;top:85.9px;color:#1c1c1c">1795</div>
<div class="fld" style="left:370.8px;top:110.6px;width:136.4px;height:16.0px;"></div>
<div class="t " style="left:374.2px;top:113.2px;color:#1c1c1c">2198</div>
<div class="rb" style="left:512.5px;top:86.0px"><svg style="left:0;top:0" width="11" height="11"><path d="M4.56 3.43 L6.63 5.50 L4.56 7.57" fill="none" stroke="#333" stroke-width="1.35" stroke-linecap="round" stroke-linejoin="round"/></svg></div>
<div class="rb" style="left:512.5px;top:113.5px"><svg style="left:0;top:0" width="11" height="11"><path d="M4.56 3.43 L6.63 5.50 L4.56 7.57" fill="none" stroke="#333" stroke-width="1.35" stroke-linecap="round" stroke-linejoin="round"/></svg></div>
<svg style="left:329.0px;top:79.2px;" width="20" height="25" viewBox="0 0 20 25"><g fill="none" stroke="#34424c" stroke-linejoin="round"><path d="M.5 2 L2.2 .5 H17.2 a1 1 0 0 1 1 1 V18.4 H2.2 L.5 16.799999999999997 Z" fill="#6f787e" stroke-width=".9"/><rect x="2.3" y="2.6" width="15.9" height="15.799999999999999" fill="#fff" stroke-width=".8"/><rect x="4.9" y="4" width="10.4" height="14.4" fill="#a4abb0" stroke-width=".75"/><rect x="6.5" y="5.4" width="7.2" height="11.2" fill="#fff" stroke-width=".65"/></g><g stroke="#34424c" stroke-width=".9" fill="#34424c"><path d="M6.4 22.6 H13.8" /><path d="M5.2 22.6 L7.4 21.2 V24 Z M15 22.6 L12.8 21.2 V24 Z" stroke="none"/><path d="M5 19 V24.4 M15.2 19 V24.4" stroke-width=".6"/></g></svg>
<svg style="left:329.0px;top:110.2px;" width="28" height="20" viewBox="0 0 28 20"><g fill="none" stroke="#34424c" stroke-linejoin="round"><path d="M.5 2 L2.2 .5 H17.2 a1 1 0 0 1 1 1 V18.6 H2.2 L.5 17.0 Z" fill="#6f787e" stroke-width=".9"/><rect x="2.3" y="2.6" width="15.9" height="16.0" fill="#fff" stroke-width=".8"/><rect x="4.9" y="4" width="10.4" height="14.6" fill="#a4abb0" stroke-width=".75"/><rect x="6.5" y="5.4" width="7.2" height="11.399999999999999" fill="#fff" stroke-width=".65"/></g><g stroke="#34424c" stroke-width=".9" fill="#34424c"><path d="M24.8 6.4 V14.6"/><path d="M24.8 4.6 L23.4 7 H26.2 Z M24.8 16.4 L23.4 14 H26.2 Z" stroke="none"/><path d="M19.4 4.2 H26.4 M19.4 17 H26.4" stroke-width=".6" stroke-dasharray="1 .8"/></g></svg>
<div class="t " style="left:303.8px;top:136.8px;color:#1c1c1c">Anchors:</div>
<div class="t " style="right:477.0px;top:154.7px;color:#1c1c1c">Sill to Wall base</div>
<div class="rb" style="left:512.5px;top:155.0px"><svg style="left:0;top:0" width="11" height="11"><path d="M4.56 3.43 L6.63 5.50 L4.56 7.57" fill="none" stroke="#333" stroke-width="1.35" stroke-linecap="round" stroke-linejoin="round"/></svg></div>
<div class="fld" style="left:370.8px;top:169.8px;width:152.6px;height:15.8px;"></div>
<div class="t " style="left:374.2px;top:172.0px;color:#1c1c1c">0</div>
<div class="t " style="right:477.0px;top:201.8px;color:#1c1c1c">Reveal to Wall Face</div>
<div class="rb" style="left:512.5px;top:202.1px"><svg style="left:0;top:0" width="11" height="11"><path d="M4.56 3.43 L6.63 5.50 L4.56 7.57" fill="none" stroke="#333" stroke-width="1.35" stroke-linecap="round" stroke-linejoin="round"/></svg></div>
<div class="fld" style="left:370.8px;top:216.8px;width:152.6px;height:16.2px;"></div>
<div class="t " style="left:374.2px;top:219.2px;color:#1c1c1c">0</div>
<svg style="left:328.3px;top:169.6px;" width="28" height="24" viewBox="0 0 28 24"><g fill="none" stroke="#34424c" stroke-linejoin="round"><path d="M.5 2 L2.2 .5 H17.2 a1 1 0 0 1 1 1 V22.4 H2.2 L.5 20.799999999999997 Z" fill="#6f787e" stroke-width=".9"/><rect x="2.3" y="2.6" width="15.9" height="19.799999999999997" fill="#fff" stroke-width=".8"/><rect x="4.9" y="4" width="10.4" height="11.8" fill="#a4abb0" stroke-width=".75"/><rect x="6.5" y="5.4" width="7.2" height="8.600000000000001" fill="#fff" stroke-width=".65"/></g><g stroke="#34424c" stroke-width=".7" fill="#34424c"><path d="M2.6 18 H27" stroke-dasharray="1 .8"/><path d="M19.4 21.2 H27" stroke-dasharray="1.2 .9"/><path d="M24.4 17 L22.9 19 H25.9 Z M24.4 22.2 L22.9 20.2 H25.9 Z" stroke="none"/><path d="M15 18.6 L16.2 20.4 H13.8 Z" stroke="none"/></g></svg>
<svg style="left:328.0px;top:221.0px;" width="28" height="13" viewBox="0 0 28 13"><g stroke="#34424c" fill="none" stroke-width=".8"><path d="M.4 .4 H4.8 V11.8 H.4 Z M15.4 .4 H20 V11.8 H15.4 Z" fill="#fff" stroke-width=".9"/><path d="M0.4 4 l3.4 -3.4"/><path d="M0.4 7.2 l4.4 -4.4"/><path d="M0.4 10.4 l4.4 -4.4"/><path d="M1.8 11.8 l3 -3"/><path d="M15.4 4 l3.4 -3.4"/><path d="M15.4 7.2 l4.4 -4.4"/><path d="M15.4 10.4 l4.4 -4.4"/><path d="M16.8 11.8 l3 -3"/><path d="M5 6.2 H15.2" stroke-width="2.2" stroke="#8e979d"/><path d="M5 5 H15.2 M5 7.4 H15.2" stroke-width=".6"/><path d="M4.8 .4 H22.6 M20 5.4 H22.6" stroke-dasharray="1 .9" stroke-width=".7"/><path d="M24.7 -4.6 V-1 M24.7 6.4 V10" stroke-width=".9"/><path d="M22.9 -3 H26.5 M22.9 8 H26.5" stroke-width=".8"/><path d="M24.7 .4 L23.1 -1.8 H26.3 Z M24.7 5.2 L23.1 7.4 H26.3 Z" fill="#34424c" stroke="none"/></g></svg>
<div class="a" style="left:371.4px;top:241.5px;width:21.8px;height:16.1px;background:#d6d6d6;border-radius:3.5px"></div>
<svg style="left:372.0px;top:241.5px;" width="80" height="16" viewBox="0 0 80 16"><g transform="translate(1.7,0)"><rect x="0" y="4.5" width="5" height="5.7" fill="#8f979c"/><path d="M.2 10.0 L4.8 4.7" stroke="#eceeef" stroke-width="1"/><g fill="none" stroke="#9aa1a6" stroke-width=".6"><path d="M8.9 3.6 V6.8 M7.3 5.2 H10.5"/></g></g><g transform="translate(14.9,0)"><rect x="0" y="4.5" width="5.1" height="5.7" fill="#8f979c"/><path d="M.2 10.0 L4.8999999999999995 4.7" stroke="#eceeef" stroke-width="1"/><g fill="none" stroke="#9aa1a6" stroke-width=".6"></g></g><g transform="translate(25.4,0)"><rect x="0" y="4.5" width="5.6" height="5.7" fill="#8f979c"/><path d="M.2 10.0 L5.3999999999999995 4.7" stroke="#eceeef" stroke-width="1"/><g fill="none" stroke="#9aa1a6" stroke-width=".6"><path d="M6.199999999999999 2.9 V6 M4.6 4.4 H7.8"/></g></g><g transform="translate(38.5,0)"><rect x="0" y="4.5" width="4.8" height="5.7" fill="#8f979c"/><path d="M.2 10.0 L4.6 4.7" stroke="#eceeef" stroke-width="1"/><g fill="none" stroke="#9aa1a6" stroke-width=".6"></g></g><g transform="translate(48.9,0)"><rect x="0" y="4.5" width="5.1" height="5.7" fill="#8f979c"/><path d="M.2 10.0 L4.8999999999999995 4.7" stroke="#eceeef" stroke-width="1"/><g fill="none" stroke="#9aa1a6" stroke-width=".6"></g></g><g transform="translate(61.4,0)"><rect x="0" y="4.5" width="5.6" height="5.7" fill="#8f979c"/><path d="M.2 10.0 L5.3999999999999995 4.7" stroke="#eceeef" stroke-width="1"/><g fill="none" stroke="#9aa1a6" stroke-width=".6"><path d="M.4 3 V6.2 M-1.2 4.6 H2"/></g></g></svg>
<div class="a" style="left:536.0px;top:82.6px;width:2.0px;height:175.0px;background:#e2e2e2"></div>
<div class="a" style="left:548.2px;top:119.5px;width:21.7px;height:16.2px;background:#bdbdc1;border-radius:4px"></div>
<svg style="left:551.5px;top:86.0px;" width="16" height="13" viewBox="0 0 16 13"><g fill="none" stroke="#34424c" stroke-width=".9" stroke-linejoin="round"><path d="M4.4 7 L11.7 1.3 V7.4" /><path d="M.6 4.2 q2.2 3.1 0 6.2 M14.9 4.2 q-2.2 3.1 0 6.2" stroke-width=".85"/><path d="M1.7 7.4 H13.8 M1.9 9 H13.6" stroke-width=".8"/></g></svg>
<svg style="left:555.0px;top:104.4px;" width="9" height="12" viewBox="0 0 9 12"><rect x=".9" y=".9" width="7" height="10.2" rx="1.6" fill="#f6f6f6" stroke="#34424c" stroke-width=".95"/><path d="M5.9 3.8 V7.4" stroke="#34424c" stroke-width=".8" stroke-dasharray="1.3 .8"/></svg>
<svg style="left:554.4px;top:122.2px;" width="10" height="12" viewBox="0 0 10 12"><path d="M5 .6 L9.4 3 V8.6 L5 11.2 L.6 8.6 V3 Z" fill="#e4e8ea" stroke="#34424c" stroke-width=".85" stroke-linejoin="round"/><path d="M.6 3 L5 5.6 V11.2 L.6 8.6 Z" fill="#858e94" stroke="#34424c" stroke-width=".6" stroke-linejoin="round"/><path d="M5 5.6 L9.4 3 V8.6 L5 11.2 Z" fill="#27323a" stroke="#34424c" stroke-width=".6" stroke-linejoin="round"/></svg>
<svg style="left:552.6px;top:140.6px;" width="14" height="13" viewBox="0 0 14 13"><g fill="none" stroke="#34424c"><path d="M1.7 .3 V11.9 M12.3 .3 V11.9" stroke-width="1.5"/><path d="M.2 1.2 H3.2 M.2 11 H3.2 M10.8 1.2 H13.8 M10.8 11 H13.8" stroke-width=".8"/><rect x="3.7" y="3.5" width="6.6" height="5.2" fill="#f4f4f4" stroke-width=".95"/><path d="M4.2 6.1 H9.8" stroke-width=".9"/></g></svg>
<svg style="left:552.9px;top:160.1px;" width="13" height="13" viewBox="0 0 13 13"><circle cx="6.5" cy="6.5" r="5.8" fill="none" stroke="#34424c" stroke-width=".95"/><path d="M6.5 5.5 V9.7" stroke="#34424c" stroke-width="1.2"/><circle cx="6.5" cy="3.7" r=".8" fill="#34424c"/></svg>
<div class="a" style="left:575.0px;top:82.3px;width:401.0px;height:151.8px;background:#fff;border:1.2px solid #8c8c8c"></div>
<svg style="left:575.0px;top:82.0px;" width="401" height="152" viewBox="0 0 401 152"><polygon points="151.3,5.8 249.4,25.7 249.4,146.5 213.3,139.4 213.3,95.9 151.3,84.0" fill="#e9e9e9"/><polygon points="151.3,5.8 152.5,4.9 250.6,24.8 249.4,25.7" fill="#f4f4f4"/><polygon points="249.4,25.7 250.6,24.8 250.6,147.4 249.4,146.5" fill="#d9d9d9"/><polygon points="155.4,12.2 212.6,23.6 212.6,91.0 155.4,78.4" fill="#dbdddc" stroke="#d0d2d1" stroke-width=".8"/><polygon points="155.4,12.2 156.8,12.8 156.8,77.4 155.4,78.4" fill="#cfd1d0"/><polygon points="155.4,78.4 156.8,77.0 212.6,89.4 212.6,91.0" fill="#cfd1d0"/><polygon points="212.6,22.8 217.4,23.8 217.4,140.4 212.6,139.4" fill="#ededed"/><polygon points="212.9,23.0 214.5,23.3 214.5,139.8 212.9,139.5" fill="#dedede"/><polygon points="217.6,25.0 245.0,30.4 245.0,83.6 217.6,78.2" fill="#dbdddc" stroke="#d0d2d1" stroke-width=".6"/><polygon points="217.6,81.4 245.0,87.0 245.0,141.6 217.6,136.0" fill="#dbdddc" stroke="#d0d2d1" stroke-width=".6"/><polygon points="217.4,78.2 246.0,83.8 246.0,86.9 217.4,81.3" fill="#f1f1f1"/></svg>
<svg style="left:576.0px;top:240.0px;" width="27" height="18" viewBox="0 0 27 18"><g fill="none" stroke="#9a9fa3" stroke-width=".75"><path d="M14.1 .4 V17.6 M14.1 .4 C7.6 1 4.6 5 4.6 9 C4.6 13 7.6 17 14.1 17.6"/><path d="M3.4 9 H16" stroke-dasharray="1.2 1"/><rect x=".4" y="7.2" width="3" height="3.6" fill="#b9bec2"/><path d="M.4 10.8 L3.4 7.2" stroke="#eee" stroke-width=".5"/><rect x="16.2" y="7.2" width="3.2" height="3.6" fill="#b9bec2"/><path d="M16.2 10.8 L19.4 7.2" stroke="#eee" stroke-width=".5"/><path d="M22 6.2 a2.6 2.6 0 0 1 3.6 3 M25 11.8 a2.6 2.6 0 0 1 -3.6 -3" stroke-width=".9"/><path d="M21.4 5 L22.2 6.6 L23.8 5.8 M25.6 13 L24.8 11.4 L23.2 12.2" stroke-width=".8"/></g></svg>
<div class="btn" style="left:607.8px;top:241.0px;width:68.6px;height:15.8px;background:#f3f3f3;border-radius:4px;box-shadow:0 0 0 .5px rgba(0,0,0,.07),0 .5px .8px rgba(0,0,0,.12)"></div>
<div class="t " style="left:492.0px;width:300px;text-align:center;top:243.2px;color:#b9b9b9">Flip</div>
<div class="a" style="left:717.2px;top:241.3px;width:22.8px;height:16.2px;background:#b9b9bd;border-radius:4px"></div>
<svg style="left:697.0px;top:241.0px;" width="44" height="16" viewBox="0 0 44 16"><g transform="translate(0,0)" fill="none" stroke="#34424c" stroke-width=".85" stroke-linejoin="round"><path d="M0 14.4 H16" stroke-width=".9"/><path d="M4.6 14.2 L7.2 2.4 H12 L10.4 14.2" fill="#fff"/><path d="M7.6 14.2 L9.6 4.4 M9 14.2 L10.8 5" stroke-width=".7"/></g><g transform="translate(23.4,0)" fill="none" stroke="#34424c" stroke-width=".85" stroke-linejoin="round"><path d="M0 14.4 H16" stroke-width=".9"/><path d="M4.6 14.2 L7.2 2.4 H12 L10.4 14.2" fill="#fff"/><path d="M7.6 14.2 L9.6 4.4 M9 14.2 L10.8 5" stroke-width=".7"/></g></svg>
<div class="sec" style="top:263.8px"><div class="tri" style="left:4.6px;top:5.1px"></div><svg style="left:15px;top:1.5px" width="20" height="14"><g fill="none" stroke="#34424c" stroke-width=".85"><rect x="1.6" y=".9" width="7.8" height="7.8" fill="#f4f4f4"/><path d="M3.1 2.4 L7.9 7.2 M7.9 2.4 L3.1 7.2" stroke-width=".9"/><path d="M11.9 1 V2.4 M11.9 3.6 V5.2" stroke-width="1.2"/><path d="M1.4 11.5 H3.4 M4.6 11.5 H6.8" stroke-width=".9"/><path d="M1.2 11.5 L2.6 10.5 V12.5 Z M7.2 11.5 L5.8 10.5 V12.5 Z" fill="#34424c" stroke="none"/><rect x="7.9" y="6.5" width="7.5" height="6.6" rx="1.3" fill="#f4f4f4" stroke-width=".95"/><rect x="9.4" y="9" width="4.5" height="2.6" fill="#8e979d" stroke-width=".6"/></g></svg><div class="t" style="font-size:8.6px;">INSTÄLLNINGAR SLAGDÖRR</div></div>
<div class="btn" style="left:304.6px;top:286.2px;width:20.8px;height:16.4px;"></div>
<div class="btn" style="left:327.4px;top:286.2px;width:20.8px;height:16.4px;"></div>
<div class="btn" style="left:350.4px;top:286.2px;width:20.8px;height:16.4px;"></div>
<div class="btn" style="left:373.2px;top:286.2px;width:602.2px;height:16.4px;"></div>
<svg style="left:304.6px;top:286.2px;" width="21" height="16" viewBox="0 0 21 16"><path d="M12.7 4 L7.6 8.3 L12.7 12.6 Z" fill="#27323a"/></svg>
<svg style="left:327.4px;top:286.2px;" width="21" height="16" viewBox="0 0 21 16"><path d="M7.9 4 L13 8.3 L7.9 12.6 Z" fill="#27323a"/></svg>
<svg style="left:350.4px;top:286.2px;" width="21" height="16" viewBox="0 0 21 16"><g fill="none" stroke="#34424c" stroke-width=".95"><rect x="3.9" y="4.4" width="7.2" height="9.8" rx="1.2" fill="#fff"/><path d="M5.6 7 H9.2 M5.6 8.8 H9.2 M5.6 10.6 H9.2" stroke-width=".9" stroke="#6f787e"/></g><path d="M10 9.9 C12.7 9.7 13.3 7.6 13.2 5" fill="none" stroke="#1c76f0" stroke-width="1.5"/><path d="M10.2 5.9 L13.2 2.2 L16.2 5.9 Z" fill="#1c76f0"/></svg>
<svg style="left:382.6px;top:288.2px;" width="8" height="13" viewBox="0 0 8 13"><rect x=".7" y=".6" width="5.8" height="10.6" rx="1.2" fill="#fff" stroke="#34424c" stroke-width="1.1"/><path d="M3 2.2 V5.2 M3 2.4 H4.4" stroke="#34424c" stroke-width="1"/></svg>
<div class="t b" style="left:395.3px;top:288.0px;color:#1c1c1c;letter-spacing:.12px">Typ Dörrblad...</div>
<svg style="left:964.0px;top:289.0px;" width="10" height="11" viewBox="0 0 10 11"><path d="M4.45 3.20 L6.75 5.50 L4.45 7.80" fill="none" stroke="#2a2a2a" stroke-width="1.25" stroke-linecap="round" stroke-linejoin="round"/></svg>
<div class="a" style="left:304.0px;top:306.0px;width:671.6px;height:1.0px;background:#dedede"></div>
<div class="a" style="left:303.8px;top:308.0px;width:162.0px;height:209.8px;background:#fff"></div>
<div class="a" style="left:465.8px;top:308.0px;width:11.2px;height:209.8px;background:#fafafa;border-left:1px solid #ececec"></div>
<div class="a" style="left:469.9px;top:311.0px;width:6.0px;height:19.4px;background:#c6c6c6;border-radius:3px"></div>
<div class="a" style="left:303.8px;top:307.2px;width:162px;height:210.6px;overflow:hidden">
<svg style="left:0;top:0" width="162" height="211"><rect x="11.80" y="4.80" width="27.00" height="60.00" fill="#79787d" /><rect x="11.80" y="61.00" width="27.00" height="3.80" fill="#68676c" /><rect x="14.80" y="8.20" width="21.20" height="50.60" fill="url(#gl)" stroke="#55545a" stroke-width=".5"/><rect x="62.19999999999999" y="1.8000000000000114" width="34" height="65.8" rx="2.5" fill="#dcdcdc"/><rect x="65.00" y="4.80" width="27.00" height="60.00" fill="#454449" /><rect x="65.00" y="61.00" width="27.00" height="3.80" fill="#68676c" /><rect x="65.00" y="60.80" width="27.00" height="4.00" fill="#29282c" /><rect x="68.00" y="7.80" width="21.00" height="51.40" fill="url(#gl3)" /><rect x="74.00" y="7.80" width="2.00" height="51.40" fill="#47464b" /><rect x="81.00" y="7.80" width="2.00" height="51.40" fill="#47464b" /><rect x="68.00" y="19.65" width="21.00" height="2.00" fill="#47464b" /><rect x="68.00" y="32.50" width="21.00" height="2.00" fill="#47464b" /><rect x="68.00" y="45.35" width="21.00" height="2.00" fill="#47464b" /><rect x="117.60" y="4.80" width="27.00" height="60.00" fill="#79787d" /><rect x="117.60" y="61.00" width="27.00" height="3.80" fill="#68676c" /><rect x="126.00" y="13.60" width="15.80" height="44.80" fill="#e4eaed" /><rect x="130.52" y="13.60" width="1.50" height="44.80" fill="#7b7a7f" /><rect x="135.78" y="13.60" width="1.50" height="44.80" fill="#7b7a7f" /><rect x="126.00" y="24.05" width="15.80" height="1.50" fill="#7b7a7f" /><rect x="126.00" y="35.25" width="15.80" height="1.50" fill="#7b7a7f" /><rect x="126.00" y="46.45" width="15.80" height="1.50" fill="#7b7a7f" /><rect x="11.80" y="91.30" width="27.00" height="60.00" fill="#79787d" /><rect x="11.80" y="147.50" width="27.00" height="3.80" fill="#68676c" /><rect x="14.60" y="94.10" width="21.40" height="50.80" fill="url(#gl)" stroke="#55545a" stroke-width=".5"/><rect x="17.30" y="94.10" width="1.00" height="50.80" fill="#77767b" /><rect x="24.80" y="94.10" width="1.00" height="50.80" fill="#77767b" /><rect x="32.30" y="94.10" width="1.00" height="50.80" fill="#77767b" /><rect x="14.60" y="97.40" width="21.40" height="1.00" fill="#77767b" /><rect x="14.60" y="105.80" width="21.40" height="1.00" fill="#77767b" /><rect x="14.60" y="115.40" width="21.40" height="1.00" fill="#77767b" /><rect x="14.60" y="141.80" width="21.40" height="1.00" fill="#77767b" /><rect x="65.00" y="91.30" width="27.00" height="60.00" fill="url(#pn)" /><rect x="117.60" y="91.30" width="27.00" height="60.00" fill="#79787d" /><rect x="117.60" y="147.50" width="27.00" height="3.80" fill="#68676c" /><rect x="120.40" y="94.10" width="9.20" height="30.80" fill="#828186" stroke="#5f5e63" stroke-width=".8"/><rect x="120.40" y="130.30" width="9.20" height="15.80" fill="#828186" stroke="#5f5e63" stroke-width=".8"/><rect x="132.40" y="94.10" width="9.40" height="30.80" fill="#828186" stroke="#5f5e63" stroke-width=".8"/><rect x="132.40" y="130.30" width="9.40" height="15.80" fill="#828186" stroke="#5f5e63" stroke-width=".8"/><rect x="11.80" y="177.80" width="27.00" height="60.00" fill="#79787d" /><rect x="11.80" y="234.00" width="27.00" height="3.80" fill="#68676c" /><rect x="14.40" y="180.80" width="9.40" height="51.00" fill="#828186" stroke="#5f5e63" stroke-width=".8"/><rect x="26.20" y="180.80" width="9.80" height="51.00" fill="#828186" stroke="#5f5e63" stroke-width=".8"/><rect x="65.00" y="177.80" width="27.00" height="60.00" fill="#79787d" /><rect x="65.00" y="234.00" width="27.00" height="3.80" fill="#68676c" /><rect x="67.80" y="180.80" width="9.20" height="10.00" fill="#828186" stroke="#5f5e63" stroke-width=".8"/><rect x="67.80" y="194.40" width="9.20" height="19.40" fill="#828186" stroke="#5f5e63" stroke-width=".8"/><rect x="79.80" y="180.80" width="9.40" height="10.00" fill="#828186" stroke="#5f5e63" stroke-width=".8"/><rect x="79.80" y="194.40" width="9.40" height="19.40" fill="#828186" stroke="#5f5e63" stroke-width=".8"/><rect x="117.60" y="177.80" width="27.00" height="60.00" fill="#79787d" /><rect x="117.60" y="234.00" width="27.00" height="3.80" fill="#68676c" /><rect x="120.40" y="180.80" width="9.20" height="10.00" fill="#828186" stroke="#5f5e63" stroke-width=".8"/><rect x="120.40" y="194.40" width="9.20" height="19.40" fill="#828186" stroke="#5f5e63" stroke-width=".8"/><rect x="132.40" y="180.80" width="9.40" height="10.00" fill="#828186" stroke="#5f5e63" stroke-width=".8"/><rect x="132.40" y="194.40" width="9.40" height="19.40" fill="#828186" stroke="#5f5e63" stroke-width=".8"/></svg>
</div>
<div class="a" style="left:358.3px;top:379.2px;width:49.2px;height:9.8px;background:#dcdcdc;border-radius:4.8px"></div>
<div class="t " style="left:180.2px;width:300px;text-align:center;top:378.1px;color:#1c1c1c">Inga Spr...</div>
<div class="t " style="left:232.9px;width:300px;text-align:center;top:378.1px;color:#1c1c1c">H-V Pos...</div>
<div class="t " style="left:285.4px;width:300px;text-align:center;top:378.1px;color:#1c1c1c">Franskt ...</div>
<div class="t " style="left:180.2px;width:300px;text-align:center;top:464.8px;color:#1c1c1c">Santa Fe...</div>
<div class="t " style="left:232.9px;width:300px;text-align:center;top:464.8px;color:#1c1c1c">Typ 1</div>
<div class="t " style="left:285.4px;width:300px;text-align:center;top:464.8px;color:#1c1c1c">Typ 2</div>
<div class="t b" style="left:484.7px;top:307.3px;color:#1c1c1c">Bredd Karm</div>
<div class="t " style="left:484.7px;top:323.8px;color:#1c1c1c">Nedre</div>
<div class="fld" style="left:580.8px;top:323.3px;width:70.0px;height:13.0px;"></div>
<div class="t " style="left:583.8px;top:323.6px;color:#1c1c1c">63</div>
<div class="t " style="left:484.7px;top:340.2px;color:#1c1c1c">Övre</div>
<div class="fld" style="left:580.8px;top:339.7px;width:70.0px;height:13.0px;"></div>
<div class="t " style="left:583.8px;top:340.1px;color:#1c1c1c">0</div>
<div class="t " style="left:484.7px;top:356.8px;color:#1c1c1c">Sida</div>
<div class="fld" style="left:580.8px;top:356.2px;width:56.0px;height:13.0px;"></div>
<div class="t " style="left:583.8px;top:356.6px;color:#1c1c1c">10</div>
<div class="rb" style="left:639.7px;top:357.3px"><svg style="left:0;top:0" width="11" height="11"><path d="M4.56 3.43 L6.63 5.50 L4.56 7.57" fill="none" stroke="#333" stroke-width="1.35" stroke-linecap="round" stroke-linejoin="round"/></svg></div>
<div class="t b" style="left:484.7px;top:390.0px;color:#1c1c1c">Spröjs</div>
<div class="t " style="left:484.7px;top:406.4px;color:#1c1c1c">Bredd</div>
<div class="fld" style="left:580.8px;top:405.9px;width:70.0px;height:13.0px;"></div>
<div class="t " style="left:583.8px;top:406.2px;color:#1c1c1c">53</div>
<div class="t " style="left:484.7px;top:422.9px;color:#1c1c1c">Tjocklek</div>
<div class="fld" style="left:580.8px;top:422.4px;width:70.0px;height:13.0px;"></div>
<div class="t " style="left:583.8px;top:422.8px;color:#1c1c1c">14</div>
<div class="t " style="left:484.7px;top:439.3px;color:#1c1c1c">Position</div>
<div class="btn" style="left:580.8px;top:437.8px;width:69.6px;height:12.6px;border-radius:3.5px"></div>
<div class="t " style="left:586.3px;top:438.1px;color:#1c1c1c">Utsida</div>
<div class="a" style="left:639.8px;top:439.3px;width:9.0px;height:9.5px;background:#1a78f2;border-radius:2.5px"></div>
<svg style="left:639.8px;top:439.3px;" width="9" height="9.5" viewBox="0 0 9 9.5"><path d="M2.8 3.8 L4.5 2.1 L6.2 3.8 M2.8 5.7 L4.5 7.4 L6.2 5.7" fill="none" stroke="#fff" stroke-width="1" stroke-linecap="round" stroke-linejoin="round"/></svg>
<div class="t b" style="left:484.7px;top:456.0px;color:#1c1c1c">Antal Luft</div>
<div class="t " style="left:484.7px;top:471.9px;color:#1c1c1c">Vertikalt</div>
<div class="fld" style="left:580.8px;top:471.4px;width:33.9px;height:13.0px;"></div>
<div class="t " style="left:583.8px;top:471.8px;color:#1c1c1c">2</div>
<div class="t " style="left:484.7px;top:488.3px;color:#1c1c1c">Horisontellt</div>
<div class="fld" style="left:580.8px;top:487.8px;width:33.9px;height:13.0px;"></div>
<div class="t " style="left:583.8px;top:488.1px;color:#1c1c1c">1</div>
<div class="sec" style="top:522.0px"><div class="tri" style="left:4.6px;top:5.1px"></div><svg style="left:15px;top:1.5px" width="20" height="14"><g fill="none" stroke="#34424c" stroke-width=".9" stroke-linejoin="round"><path d="M8 4.1 H1.5 L4 7.1 L1.5 10.2 V11 H15.4"/><path d="M8 7.2 V2.4 H15.4 M10.9 2.4 V11 M10.9 7 H15.4"/><path d="M11 3.2 H15.4" stroke-width="1.5"/></g></svg><div class="t" style="font-size:8.67px;top:1.8px">FLOOR PLAN AND SECTION</div></div>
<div class="a" style="left:304.0px;top:543.0px;width:671.6px;height:196.4px;background:#fff"></div>
<div class="a" style="left:304px;top:543px;width:671.6px;height:196.6px;overflow:hidden">
<div class="a" style="left:0;top:0.00px;width:661.0px;height:15.75px;background:#eeeeee"></div><div class="tri" style="left:3.6px;top:5.10px"></div><div class="t b" style="left:46.8px;top:1.75px;font-size:8.6px;color:#0e0e0e">FLOOR PLAN DISPLAY</div>
<div class="a" style="left:0;top:30.90px;width:661.0px;height:.9px;background:#e4e4e4"></div><div class="t" style="left:48.9px;top:17.50px;color:#0e0e0e">Floor Plan Display:</div><div class="t" style="left:258.4px;top:17.50px;color:#0e0e0e">Symbolic</div><svg style="left:631.6px;top:17.35px" width="13" height="13"><g fill="none" stroke="#34424c" stroke-width=".7"><path d="M1 5 L3 1.4 H12 L10 5 Z M1 5 V7 M12 1.4 V3" stroke-dasharray="1.2 .8"/><path d="M1 8.4 L3 6 H12 L10 8.4 Z M1 8.4 V11.4 H10 V8.4 M10 11.4 L12 9 V6" fill="#fff"/><path d="M2.6 8 L4.2 6.4 M4.6 8 L6.2 6.4 M6.6 8 L8.2 6.4 M8.6 8 L10.2 6.4" stroke-width=".9"/></g></svg>
<div class="a" style="left:0;top:31.50px;width:661.0px;height:15.75px;background:#eeeeee"></div><div class="tri" style="left:3.6px;top:36.60px"></div><div class="t b" style="left:46.8px;top:33.25px;font-size:8.6px;color:#0e0e0e">SYMBOL &amp; OUTLINE</div>
<div class="a" style="left:0;top:62.40px;width:661.0px;height:.9px;background:#e4e4e4"></div><svg style="left:19.6px;top:47.85px" width="24" height="14"><path d="M.4 12.9 L7.5 5.5" stroke="#34424c" stroke-width=".95"/><g transform="translate(9.5,1.1)"><path d="M0 3.6 C.8 -.4 5.4 -.8 6.7 4.4" fill="none" stroke="#34424c" stroke-width=".95"/><path d="M7.7 2.3 L6.9 5.3 L4.2 4.2" fill="none" stroke="#34424c" stroke-width=".95" stroke-linejoin="round"/><path d="M7 7.2 L8.2 6 H12.3 V9.8 L11.2 11 H7 Z" fill="#2a353d" stroke="#34424c" stroke-width=".8" stroke-linejoin="round"/><rect x="7.9" y="8" width="2.5" height="2.2" fill="#fff"/></g></svg><div class="t" style="left:48.9px;top:49.00px;color:#0e0e0e">Override Object's Line Types</div><svg style="left:565.6px;top:49.25px" width="11" height="11"><rect x=".6" y=".6" width="9.2" height="9.2" rx=".5" fill="#fff" stroke="#3c464d" stroke-width=".85"/></svg>
<div class="a" style="left:0;top:78.15px;width:661.0px;height:.9px;background:#e4e4e4"></div><svg style="left:19.6px;top:63.60px" width="24" height="14"><path d="M1.8 2.5 V8.95 L4.40 12.90 L7.00 8.95 V2.5" fill="none" stroke="#34424c" stroke-width=".95" stroke-linejoin="miter"/><path d="M4.40 9.36 V12.50" stroke="#34424c" stroke-width=".9"/><path d="M3.36 11.03 L4.40 12.90 L5.44 11.03 Z" fill="#34424c"/><path d="M0.4 12.8 H3.4" stroke="#34424c" stroke-width=".9"/><g transform="translate(9.5,1.1)"><path d="M0 3.6 C.8 -.4 5.4 -.8 6.7 4.4" fill="none" stroke="#34424c" stroke-width=".95"/><path d="M7.7 2.3 L6.9 5.3 L4.2 4.2" fill="none" stroke="#34424c" stroke-width=".95" stroke-linejoin="round"/><path d="M7 7.2 L8.2 6 H12.3 V9.8 L11.2 11 H7 Z" fill="#2a353d" stroke="#34424c" stroke-width=".8" stroke-linejoin="round"/><rect x="7.9" y="8" width="2.5" height="2.2" fill="#fff"/></g></svg><div class="t" style="left:48.9px;top:64.75px;color:#0e0e0e">Override Object's Pens</div><svg style="left:565.6px;top:65.00px" width="11" height="11"><rect x=".6" y=".6" width="9.2" height="9.2" rx=".5" fill="#fff" stroke="#3c464d" stroke-width=".85"/></svg>
<div class="a" style="left:0;top:93.90px;width:661.0px;height:.9px;background:#e4e4e4"></div><svg style="left:19.6px;top:79.35px" width="24" height="14"><rect x="0.8" y="2.3" width="9.4" height="9.4" rx="1.3" fill="#fff" stroke="#46535b" stroke-width="0.95"/><path d="M13.2 11.65 L21.9 2.85" stroke="#34424c" stroke-width=".95"/></svg><div class="t" style="left:48.9px;top:80.50px;color:#0e0e0e">Symbol Line</div><div class="t" style="left:258.4px;top:80.50px;color:#0e0e0e">heldragen linje</div><div class="a" style="left:567.8px;top:86.25px;width:75.6px;height:1px;background:#222"></div>
<div class="a" style="left:0;top:109.65px;width:661.0px;height:.9px;background:#e4e4e4"></div><svg style="left:19.6px;top:95.10px" width="24" height="14"><rect x="0.8" y="2.3" width="9.4" height="9.4" rx="1.3" fill="#fff" stroke="#46535b" stroke-width="0.95"/><path d="M12.5 11.9 H16.5" stroke="#34424c" stroke-width=".9"/><path d="M16.6 1.7 V8.15 L19.20 12.10 L21.80 8.15 V1.7" fill="none" stroke="#34424c" stroke-width=".95" stroke-linejoin="miter"/><path d="M19.20 8.56 V11.70" stroke="#34424c" stroke-width=".9"/><path d="M18.16 10.23 L19.20 12.10 L20.24 10.23 Z" fill="#34424c"/></svg><div class="t" style="left:48.9px;top:96.25px;color:#0e0e0e">Symbol Line Pen</div><div class="t" style="left:258.4px;top:96.25px;color:#0e0e0e">0.25 mm</div><div class="t" style="left:566px;top:96.25px;color:#0e0e0e">23</div><svg style="left:607px;top:95.40px" width="37" height="13"><rect x=".6" y=".6" width="35.2" height="11.6" fill="#fff" stroke="#2a2a2a" stroke-width="1"/><rect x="4.4" y="2.8" width="2.1" height="7.2" fill="#fb6505"/><rect x="11.6" y="2.8" width="22" height="7.2" fill="#fb6505"/></svg>
<div class="a" style="left:0;top:110.25px;width:661.0px;height:15.75px;background:#eeeeee"></div><div class="tri" style="left:3.6px;top:115.35px"></div><div class="t b" style="left:46.8px;top:112.00px;font-size:8.6px;color:#0e0e0e">CUT SURFACES</div>
<div class="a" style="left:0;top:141.15px;width:661.0px;height:.9px;background:#e4e4e4"></div><svg style="left:19.6px;top:126.60px" width="24" height="14"><path d="M.5 1.7 V4.2 L3.3 7.8 L6.2 4.2 V1.7 M3.3 5.4 V7.6" fill="none" stroke="#34424c" stroke-width=".9" stroke-linejoin="round"/><path d="M.9 12.7 L4.5 9.1" stroke="#34424c" stroke-width=".9"/><path d="M5.8 12 H13 C12.8 9.4 11 6.2 8.6 5.9 C7 7.4 6 9.6 5.8 12 Z" fill="#9aa2a7" stroke="#34424c" stroke-width="1" stroke-linejoin="round"/><path d="M7.4 11 L10 8" stroke="#34424c" stroke-width=".7"/><g transform="translate(9.4,1.3)"><path d="M0 3.6 C.8 -.4 5.4 -.8 6.7 4.4" fill="none" stroke="#34424c" stroke-width=".95"/><path d="M7.7 2.3 L6.9 5.3 L4.2 4.2" fill="none" stroke="#34424c" stroke-width=".95" stroke-linejoin="round"/><path d="M7 7.2 L8.2 6 H12.3 V9.8 L11.2 11 H7 Z" fill="#2a353d" stroke="#34424c" stroke-width=".8" stroke-linejoin="round"/><rect x="7.9" y="8" width="2.5" height="2.2" fill="#fff"/></g></svg><div class="t" style="left:48.9px;top:127.75px;color:#0e0e0e">Override Object's Attributes</div><svg style="left:565.6px;top:128.00px" width="11" height="11"><rect x=".6" y=".6" width="9.2" height="9.2" rx=".5" fill="#fff" stroke="#3c464d" stroke-width=".85"/></svg>
<div class="a" style="left:0;top:156.90px;width:661.0px;height:.9px;background:#e4e4e4"></div><svg style="left:19.6px;top:142.35px" width="24" height="14"><rect x="1.2" y="2.95" width="8.9" height="8.6" rx="1.3" fill="#fff" stroke="#27323a" stroke-width="1.5"/><path d="M13.3 11.85 H17.2" stroke="#34424c" stroke-width=".9"/><path d="M16.7 2.65 V8.35 L19.30 11.85 L21.90 8.35 V2.65" fill="none" stroke="#34424c" stroke-width=".95" stroke-linejoin="miter"/><path d="M19.30 8.72 V11.45" stroke="#34424c" stroke-width=".9"/><path d="M18.26 10.19 L19.30 11.85 L20.34 10.19 Z" fill="#34424c"/></svg><div class="t" style="left:48.9px;top:143.50px;color:#0e0e0e">Cut Line Pen</div><div class="t" style="left:258.4px;top:143.50px;color:#0e0e0e">0.25 mm</div><div class="t" style="left:566px;top:143.50px;color:#0e0e0e">23</div><svg style="left:607px;top:142.65px" width="37" height="13"><rect x=".6" y=".6" width="35.2" height="11.6" fill="#fff" stroke="#2a2a2a" stroke-width="1"/><rect x="4.4" y="2.8" width="2.1" height="7.2" fill="#fb6505"/><rect x="11.6" y="2.8" width="22" height="7.2" fill="#fb6505"/></svg>
<div class="a" style="left:0;top:172.65px;width:661.0px;height:.9px;background:#e4e4e4"></div><svg style="left:19.6px;top:158.10px" width="24" height="14"><rect x=".9" y="2.5" width="9.3" height="9.4" fill="#fff" stroke="#34424c" stroke-width=".9"/><path d="M0.90 6.03 L4.43 2.50" stroke="#34424c" stroke-width="1.1"/><path d="M0.90 9.20 L7.60 2.50" stroke="#34424c" stroke-width="1.1"/><path d="M1.46 11.80 L10.20 3.06" stroke="#34424c" stroke-width="1.1"/><path d="M4.62 11.80 L10.20 6.22" stroke="#34424c" stroke-width="1.1"/><path d="M7.78 11.80 L10.20 9.38" stroke="#34424c" stroke-width="1.1"/><path d="M13 11.3 H21.4 C21.2 8.100000000000001 19.4 4.3 16.6 3.7 C14.4 5.300000000000001 13.2 8.100000000000001 13 11.3 Z" fill="#fff" stroke="#34424c" stroke-width="1.1" stroke-linejoin="round"/><path d="M14.6 10.3 L18.4 6.1 M17 10.7 L20 7.5" stroke="#34424c" stroke-width=".8"/></svg><div class="t" style="left:48.9px;top:159.25px;color:#0e0e0e">Cut Fill</div><div class="t" style="left:258.4px;top:159.25px;color:#0e0e0e">Empty Fill</div><svg style="left:607px;top:158.40px" width="37" height="13"><rect x=".6" y=".6" width="35.2" height="11.6" fill="#fff" stroke="#f7873d" stroke-width="1"/></svg>
<div class="a" style="left:0;top:188.40px;width:661.0px;height:.9px;background:#e4e4e4"></div><svg style="left:19.6px;top:173.85px" width="24" height="14"><path d="M0.60 6.11 L4.36 2.35" stroke="#34424c" stroke-width="1.05"/><path d="M0.60 9.48 L7.73 2.35" stroke="#34424c" stroke-width="1.05"/><path d="M1.19 12.25 L10.50 2.94" stroke="#34424c" stroke-width="1.05"/><path d="M4.56 12.25 L10.50 6.31" stroke="#34424c" stroke-width="1.05"/><path d="M7.93 12.25 L10.50 9.68" stroke="#34424c" stroke-width="1.05"/><path d="M13.3 11.85 H17.2" stroke="#34424c" stroke-width=".9"/><path d="M16.7 2.65 V8.35 L19.30 11.85 L21.90 8.35 V2.65" fill="none" stroke="#34424c" stroke-width=".95" stroke-linejoin="miter"/><path d="M19.30 8.72 V11.45" stroke="#34424c" stroke-width=".9"/><path d="M18.26 10.19 L19.30 11.85 L20.34 10.19 Z" fill="#34424c"/></svg><div class="t" style="left:48.9px;top:175.00px;color:#0e0e0e">Cut Fill Foreground Pen</div><div class="t" style="left:258.4px;top:175.00px;color:#0e0e0e">0.13 mm</div><div class="t" style="left:566px;top:175.00px;color:#0e0e0e">91</div><svg style="left:607px;top:174.15px" width="37" height="13"><rect x=".6" y=".6" width="35.2" height="11.6" fill="#fff" stroke="#2a2a2a" stroke-width="1"/></svg>
<div class="a" style="left:0;top:204.15px;width:661.0px;height:.9px;background:#e4e4e4"></div><svg style="left:19.6px;top:189.60px" width="24" height="14"><rect x=".6" y="2.2" width="9.9" height="8" fill="#8e979d"/><path d="M16.7 2.2 V7.90 L19.30 11.40 L21.90 7.90 V2.2" fill="none" stroke="#34424c" stroke-width=".95" stroke-linejoin="miter"/><path d="M19.30 8.27 V11.00" stroke="#34424c" stroke-width=".9"/><path d="M18.26 9.74 L19.30 11.40 L20.34 9.74 Z" fill="#34424c"/></svg><div class="t" style="left:48.9px;top:190.75px;color:#0e0e0e">Cut Fill Background Pen</div><div class="t" style="left:258.4px;top:190.75px;color:#0e0e0e">Transparent</div><div class="t" style="left:566px;top:190.75px;color:#0e0e0e">0</div><svg style="left:607px;top:189.90px" width="37" height="13"><rect x=".6" y=".6" width="35.2" height="11.6" fill="#fff" stroke="#2a2a2a" stroke-width="1"/><circle cx="17.6" cy="6.6" r="2.4" fill="none" stroke="#555" stroke-width=".7"/><path d="M14.6 9.6 L21 2.6" stroke="#555" stroke-width=".7"/></svg>
<div class="a" style="left:661.0px;top:0;width:11px;height:197px;background:#fafafa;border-left:1px solid #f1f1f1"></div><div class="a" style="left:663.8px;top:2px;width:6px;height:183.8px;background:#c6c6c6;border-radius:3px"></div></div>
<div class="sec" style="top:743.4px"><div class="tri" style="left:4.6px;top:5.1px"></div><svg style="left:15px;top:1.5px" width="20" height="14"><g fill="none" stroke="#34424c" stroke-width=".9"><path d="M8.1 4 V12.7" stroke-width="1"/><circle cx="8.1" cy="2.5" r="1.55" fill="#ececec"/><path d="M1.4 8.6 H15.8" stroke-width=".8"/><path d="M2 7.4 C2.6 6 4.6 6.6 3.8 8 L2.2 10.2 H4.8" stroke-width=".8"/><path d="M11.6 6 L12.8 10.4 C14.8 10 15.6 8.4 14 7.2" stroke-width=".8"/><path d="M6.8 9.9 L9.4 7.3" stroke-width=".9"/></g></svg><div class="t" style="">DIMENSION MARKER</div></div>
<div class="btn" style="left:304.2px;top:765.0px;width:552.8px;height:17.0px;border-radius:4px"></div>
<div class="t " style="left:307.2px;top:767.5px;color:#1c1c1c">No Marker</div>
<svg style="left:846.0px;top:768.0px;" width="10" height="11" viewBox="0 0 10 11"><path d="M4.25 3.20 L6.55 5.50 L4.25 7.80" fill="none" stroke="#2a2a2a" stroke-width="1.2" stroke-linecap="round" stroke-linejoin="round"/></svg>
<div class="a" style="left:866.2px;top:764.2px;width:110.0px;height:110.4px;border:1.3px solid #8a8a8a;background:#ececec"></div>
<div class="t " style="left:303.9px;top:799.1px;color:#1c1c1c">Marker Size:</div>
<svg style="left:448.0px;top:797.5px;" width="25" height="15" viewBox="0 0 25 15"><g fill="none" stroke="#9ea3a7" stroke-width=".8"><circle cx="9.4" cy="7.7" r="4.6"/><path d="M.8 7.7 H14.4" stroke-dasharray="1.8 .9"/><path d="M7.8 5.6 H11 M7.8 9.8 H11" stroke-width=".6"/><rect x="14.6" y="3" width="6" height="9.6" stroke-dasharray="1.2 .9"/><path d="M22.3 4 V11.6" stroke-width=".9"/><path d="M22.3 2.4 L21 4.6 H23.6 Z M22.3 13.2 L21 11 H23.6 Z" fill="#9ea3a7" stroke="none"/></g></svg>
<div class="fld" style="left:473.8px;top:797.4px;width:57.0px;height:14.6px;background:#f4f4f4;box-shadow:0 .6px .6px rgba(0,0,0,.09)"></div>
<div class="t " style="left:476.6px;top:799.4px;color:#b4b4b4">0,10</div>
<div class="t " style="left:534.4px;top:799.4px;color:#8f8f8f">mm</div>
<div class="a" style="left:304.4px;top:823.8px;width:10.0px;height:10.0px;background:#f4f4f4;border:.8px solid #cfcfcf;border-radius:1.5px"></div>
<svg style="left:304.4px;top:823.8px;" width="10" height="10" viewBox="0 0 10 10"><path d="M2.4 5.4 L4.2 7.4 L7.8 2.6" fill="none" stroke="#b4b4b4" stroke-width="1" stroke-linecap="round" stroke-linejoin="round"/></svg>
<div class="t " style="left:319.7px;top:822.9px;color:#8f8f8f">Uniform Marker Pen</div>
<svg style="left:448.0px;top:821.9px;" width="25" height="15" viewBox="0 0 25 15"><g fill="none" stroke="#9ea3a7" stroke-width=".8"><circle cx="9.4" cy="7.7" r="4.6"/><path d="M.8 7.7 H14.4" stroke-dasharray="1.8 .9"/><path d="M7.8 5.6 H11 M7.8 9.8 H11" stroke-width=".6"/><path d="M17.8 2.8 V9.2 L20.4 13.2 L23 9.2 V2.8 M20.4 9.6 V12.8" stroke-width=".9" stroke-linejoin="round"/><path d="M15.2 13.2 H19.4" stroke-width=".8"/></g></svg>
<div class="fld" style="left:473.6px;top:822.6px;width:26.0px;height:12.4px;background:#f4f4f4;box-shadow:0 .6px .6px rgba(0,0,0,.09)"></div>
<div class="t " style="left:476.6px;top:823.1px;color:#b4b4b4">1</div>
<div class="btn" style="left:505.2px;top:821.6px;width:25.6px;height:14.4px;border-radius:4px;background:#f8f8f8;box-shadow:0 0 0 .5px rgba(0,0,0,.04),0 .6px .9px rgba(0,0,0,.14)"></div>
<div class="a" style="left:511.0px;top:824.6px;width:1.1px;height:8.0px;background:#222"></div>
<div class="a" style="left:517.8px;top:824.2px;width:10.2px;height:8.8px;background:#050505"></div>
<svg style="left:866.4px;top:876.8px;" width="22" height="21" viewBox="0 0 22 21"><g fill="none" stroke="#34424c" stroke-width=".75"><path d="M.8 .8 V19.8 M5.6 3.6 V15.6 H13 M.8 18.2 H13" stroke-width=".9"/><g stroke-width=".9"><path d="M.8 8.4 l4.6 -4.6"/><path d="M.8 10.8 l4.6 -4.6"/><path d="M.8 13.2 l4.6 -4.6"/><path d="M.8 15.6 l4.6 -4.6"/><path d="M.8 18 l4.6 -4.6"/><path d="M3.4 18.2 l2.4 -2.4"/><path d="M5.8 18.2 l2.4 -2.4"/><path d="M8.2 18.2 l2.4 -2.4"/><path d="M10.6 18.2 l2.4 -2.4"/></g><path d="M1.4 2 H5.2 M3.2 .4 V3.4" stroke-dasharray=".9 .7"/><path d="M7.4 12.4 H11.6 M8.4 11.2 L10.6 13.6 M10.6 11.2 L8.4 13.6" stroke-width=".6"/><path d="M12.6 12.4 H16" stroke-dasharray=".9 .7"/><path d="M18 10.4 V18" stroke-width=".9"/><path d="M18 9 L16.8 11.2 H19.2 Z M18 19.4 L16.8 17.2 H19.2 Z" fill="#34424c" stroke="none"/></g></svg>
<div class="fld" style="left:894.0px;top:879.4px;width:81.6px;height:15.8px;"></div>
<div class="t " style="left:897.6px;top:881.5px;color:#1c1c1c">0</div>
<div class="sec" style="top:902.1px"><div class="trir" style="left:5.2px;top:5px;border-left-color:#b7babd"></div><svg style="left:15px;top:1.5px" width="20" height="14"><g fill="none" stroke="#a7acb0" stroke-width=".85"><path d="M1.6 4.2 V13 M.4 4.2 H2.8 M.4 13 H2.8" stroke-width=".7"/><path d="M4 13 L7.6 4.4 L11.2 13 M5.4 10.2 H9.8"/><path d="M11.6 1 V5.4 L13.4 8.4 H14 L15.8 5.4 V1 M13.7 4 V8" stroke-width=".8"/></g></svg><div class="t" style="color:#a3a3a3;">MARKER TEXT STYLE</div></div>
<div class="sec" style="top:923.6px"><div class="trir" style="left:5.2px;top:5px;border-left-color:#b7babd"></div><svg style="left:15px;top:1.5px" width="20" height="14"><g fill="none" stroke="#a7acb0" stroke-width=".85"><rect x="1.6" y=".9" width="7.8" height="7.8" fill="#f4f4f4"/><path d="M3.1 2.4 L7.9 7.2 M7.9 2.4 L3.1 7.2" stroke-width=".9"/><path d="M11.9 1 V2.4 M11.9 3.6 V5.2" stroke-width="1.2"/><path d="M1.4 11.5 H3.4 M4.6 11.5 H6.8" stroke-width=".9"/><path d="M1.2 11.5 L2.6 10.5 V12.5 Z M7.2 11.5 L5.8 10.5 V12.5 Z" fill="#a7acb0" stroke="none"/><rect x="7.9" y="6.5" width="7.5" height="6.6" rx="1.3" fill="#f4f4f4" stroke-width=".95"/><rect x="9.4" y="9" width="4.5" height="2.6" fill="#8e979d" stroke-width=".6"/></g></svg><div class="t" style="color:#a3a3a3;">MARKER CUSTOM SETTINGS</div></div>
<div class="sec" style="top:944.9px"><div class="trir" style="left:5.2px;top:5px;border-left-color:#8c9195"></div><svg style="left:15px;top:1.5px" width="20" height="14"><rect x="3.9" y="1" width="8.8" height="11.2" rx="1.5" fill="#fff" stroke="#34424c" stroke-width="1"/><path d="M5.8 3.6 H10.6 M5.8 5.4 H9 M5.8 7.2 H10.6 M5.8 9 H9 M5.8 10.4 H10.6" stroke="#5f6a71" stroke-width="1"/></svg><div class="t" style="">CLASSIFICATION AND PROPERTIES</div></div>
<div class="a" style="left:304.0px;top:971.2px;width:672.0px;height:0.9px;background:#d9d9d9"></div>
<div class="btn" style="left:828.1px;top:980.2px;width:68.6px;height:15.6px;border-radius:4.5px"></div>
<div class="t " style="left:712.4px;width:300px;text-align:center;top:982.4px;color:#1c1c1c">Cancel</div>
<div class="a" style="left:906.4px;top:980.2px;width:68.8px;height:15.6px;background:linear-gradient(#2b8bfb,#0a70f0);border-radius:4.5px;box-shadow:0 .6px 1px rgba(0,40,120,.35)"></div>
<div class="t " style="left:790.6px;width:300px;text-align:center;top:982.4px;color:#fff">OK</div>
</div></body></html>
